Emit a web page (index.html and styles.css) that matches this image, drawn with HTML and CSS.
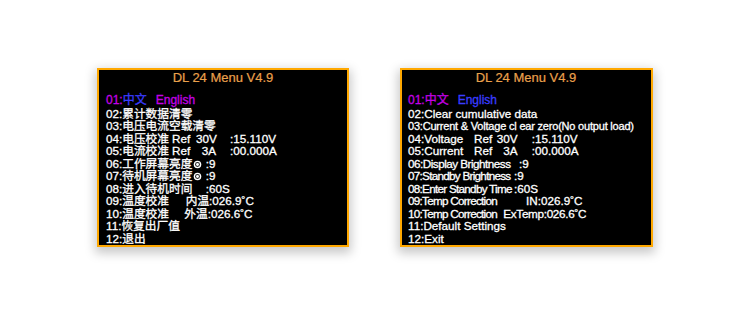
FILE: index.html
```html
<!DOCTYPE html>
<html>
<head>
<meta charset="utf-8">
<link rel="stylesheet" href="styles.css">
</head>
<body>
<div class="stage">
  <div class="panel">
    <div class="title">DL 24 Menu V4.9</div>
    <div class="rows">
      <div class="row first"><span class="mag">01:</span><span class="blue">中文</span><span class="mag en">English</span></div>
      <div class="row">02:累计数据清零</div>
      <div class="row">03:电压电流空载清零</div>
      <div class="row"><span class="c w66">04:电压校准</span><span class="c w24">Ref</span><span class="c w34">30V</span><span>:15.110V</span></div>
      <div class="row"><span class="c w66">05:电流校准</span><span class="c w24">Ref</span><span class="c w34 p6">3A</span><span>:00.000A</span></div>
      <div class="row"><span class="c w100">06:工作屏幕亮度<svg class="sun" viewBox="0 0 10 10"><circle cx="5" cy="5" r="4.2" fill="#fff"/><circle cx="5" cy="5" r="2.7" fill="#222"/><circle cx="5" cy="5" r="1.6" fill="#fff"/></svg></span><span>:9</span></div>
      <div class="row"><span class="c w100">07:待机屏幕亮度<svg class="sun" viewBox="0 0 10 10"><circle cx="5" cy="5" r="4.2" fill="#fff"/><circle cx="5" cy="5" r="2.7" fill="#222"/><circle cx="5" cy="5" r="1.6" fill="#fff"/></svg></span><span>:9</span></div>
      <div class="row"><span class="c w100">08:进入待机时间</span><span>:60S</span></div>
      <div class="row"><span class="c w80">09:温度校准</span><span>内温:026.9˚C</span></div>
      <div class="row"><span class="c w78">10:温度校准</span><span>外温:026.6˚C</span></div>
      <div class="row">11:恢复出厂值</div>
      <div class="row">12:退出</div>
    </div>
  </div>
  <div class="panel panel-r">
    <div class="title">DL 24 Menu V4.9</div>
    <div class="rows">
      <div class="row first"><span class="mag">01:中文</span><span class="blue en">English</span></div>
      <div class="row">02:Clear cumulative data</div>
      <div class="row tight">03:Current &amp; Voltage cl ear zero(No output load)</div>
      <div class="row"><span class="c w66">04:Voltage</span><span class="c w23">Ref</span><span class="c w35">30V</span><span>:15.110V</span></div>
      <div class="row"><span class="c w66">05:Current</span><span class="c w23">Ref</span><span class="c w35 p7">3A</span><span>:00.000A</span></div>
      <div class="row"><span class="c w111 cond5">06:Display Brightness</span><span>:9</span></div>
      <div class="row"><span class="c w106 cond7">07:Standby Brightness</span><span>:9</span></div>
      <div class="row"><span class="c w106 cond7">08:Enter Standby Time</span><span>:60S</span></div>
      <div class="row"><span class="c w118 cond7">09:Temp Correction</span><span>IN:026.9˚C</span></div>
      <div class="row"><span class="c w95 cond7">10:Temp Correction</span><span class="cond3">ExTemp:026.6˚C</span></div>
      <div class="row">11:Default Settings</div>
      <div class="row">12:Exit</div>
    </div>
  </div>
</div>
</body>
</html>
```
FILE: styles.css
```css
html, body {
  margin: 0;
  padding: 0;
  background: #ffffff;
}
body {
  width: 750px;
  height: 326px;
  overflow: hidden;
  font-family: "Liberation Sans", Arial, "Noto Sans CJK SC", sans-serif;
}
.stage {
  display: flex;
  gap: 51px;
  padding: 68px 0 0 97px;
}
.panel {
  box-sizing: border-box;
  width: 252px;
  height: 179px;
  background: #000;
  border: 2px solid #ffa800;
  box-shadow: 0 4px 10px 2px rgba(0, 0, 0, 0.22);
  padding-left: 7px;
  color: #fff;
}
.panel-r {
  width: 253px;
  padding-left: 6px;
}
.title {
  font-size: 13px;
  line-height: 15px;
  color: #eaa14c;
  text-align: center;
  padding-right: 7px;
  -webkit-text-stroke: 0.2px #eaa14c;
}
.rows {
  padding-top: 9px;
  -webkit-text-stroke: 0.3px currentColor;
}
.row {
  font-size: 11.7px;
  line-height: 12.5px;
  height: 12.5px;
  white-space: nowrap;
  display: flex;
  align-items: baseline;
}
.row.first {
  height: 13.5px;
  line-height: 13.5px;
  font-size: 12px;
}
.row.tight {
  font-size: 11px;
  letter-spacing: -0.2px;
}
.cond3 { letter-spacing: -0.3px; }
.cond5 { letter-spacing: -0.5px; }
.cond7 { letter-spacing: -0.72px; }
.mag { color: #c400e6; }
.blue { color: #3a3cff; }
.en { margin-left: 9px; }
.c { display: inline-block; flex: none; }
.w66 { width: 66px; }
.w24 { width: 24px; }
.w23 { width: 22.7px; }
.w34 { width: 34px; }
.w35 { width: 35px; }
.p6 { padding-left: 5.7px; box-sizing: border-box; }
.p7 { padding-left: 6.6px; box-sizing: border-box; }
.w100 { width: 99.7px; }
.w80 { width: 79.7px; }
.w78 { width: 78.3px; }
.w111 { width: 111px; }
.w106 { width: 106px; }
.w118 { width: 118px; }
.w95 { width: 95.3px; }
.sun {
  width: 9px;
  height: 9px;
  margin-left: 1px;
  vertical-align: -1px;
}
```
